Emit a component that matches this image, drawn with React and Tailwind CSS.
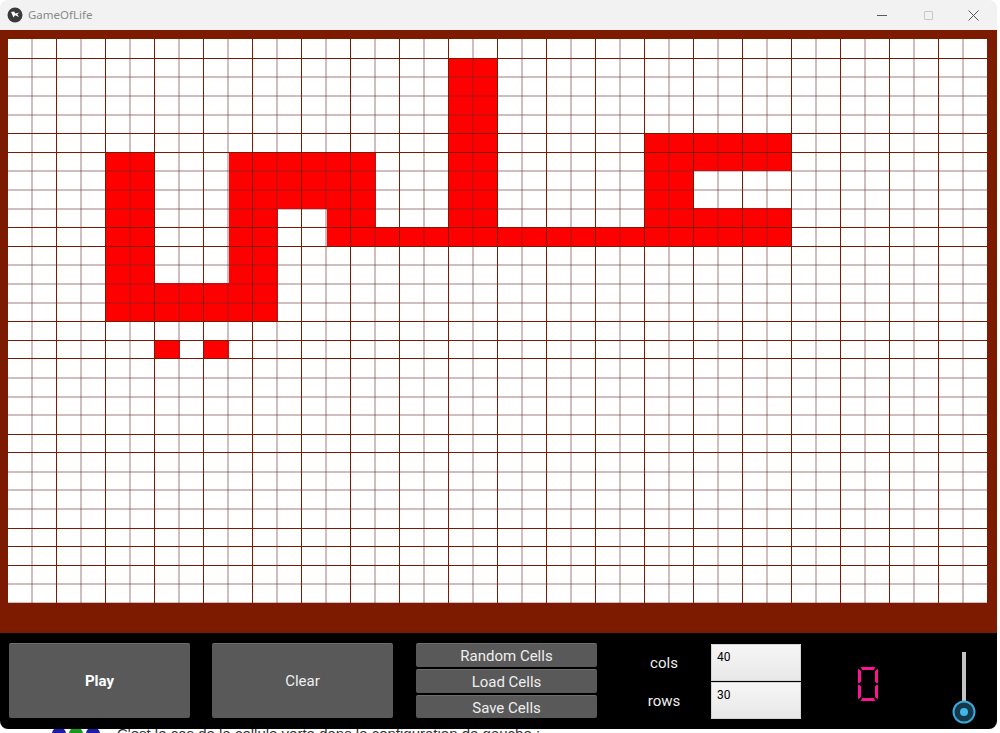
import React from "react";

const COLS = 40;
const ROWS = 30;
const CW = 24.5;
const RH = 18.78;
const OFF = 0.22;
const DARK_ROWS = new Set([1, 5, 6, 10, 11, 15, 16, 17, 21, 22, 26, 27, 28]);

function buildAlive() {
  const s = new Set();
  const add = (c0, c1, r0, r1) => {
    for (let c = c0; c <= c1; c++) for (let r = r0; r <= r1; r++) s.add(c + "," + r);
  };
  add(18, 19, 1, 9);
  add(4, 5, 6, 14);
  add(6, 10, 13, 14);
  add(9, 10, 6, 14);
  add(9, 14, 6, 8);
  add(13, 14, 9, 10);
  add(13, 31, 10, 10);
  add(26, 31, 5, 6);
  add(26, 27, 7, 8);
  add(26, 31, 9, 9);
  add(6, 6, 16, 16);
  add(8, 8, 16, 16);
  return s;
}

const DARK = "#7a1a00";
const LIGHT = "rgba(100,40,40,0.3)";

function Board() {
  const alive = buildAlive();
  const cells = [];
  alive.forEach((k) => {
    const [c, r] = k.split(",").map(Number);
    const y0 = OFF + RH * r;
    const y1 = OFF + RH * (r + 1);
    cells.push(
      <rect key={"c" + k} x={CW * c} y={y0} width={CW} height={y1 - y0 + 0.6} fill="#ff0000" />
    );
  });
  const lines = [];
  for (let k = 1; k <= COLS; k++) {
    const x = CW * k - 1;
    const frac = x - Math.floor(x);
    if (Math.abs(frac) < 0.01) {
      lines.push(<rect key={"v" + k} x={x} y={0} width={1} height={564} fill={DARK} />);
    } else {
      lines.push(<rect key={"v" + k} x={Math.floor(x)} y={0} width={2} height={564} fill={LIGHT} />);
    }
  }
  for (let k = 1; k <= ROWS; k++) {
    const t = OFF + RH * k;
    if (DARK_ROWS.has(k)) {
      lines.push(<rect key={"h" + k} x={0} y={Math.round(t)} width={980} height={1} fill={DARK} />);
    } else {
      lines.push(<rect key={"h" + k} x={0} y={Math.floor(t)} width={980} height={2} fill={LIGHT} />);
    }
  }
  return (
    <svg width="980" height="564" viewBox="0 0 980 564" className="block bg-white" shapeRendering="crispEdges">
      {cells}
      {lines}
    </svg>
  );
}

function KivyIcon() {
  return (
    <svg width="16" height="16" viewBox="0 0 16 16" className="block">
      <circle cx="8" cy="8" r="7.5" fill="#3a3a3a" />
      <path d="M4 5 L6.5 10.5 L8 8.2 L12 10 L10.2 7.2 L12.5 5.6 L8.4 6.6 L7 4.6 Z" fill="#ffffff" />
    </svg>
  );
}

function SevenSegZero() {
  const c = "#ff1493";
  return (
    <svg width="22" height="36" viewBox="0 0 22 36" className="block">
      <polygon points="3.5,1 18.5,1 16.5,4 5.5,4" fill={c} />
      <polygon points="5.5,32 16.5,32 18.5,35 3.5,35" fill={c} />
      <polygon points="1,2.5 4,5 4,16 1,17.4" fill={c} />
      <polygon points="1,18.6 4,20 4,31 1,33.5" fill={c} />
      <polygon points="21,2.5 18,5 18,16 21,17.4" fill={c} />
      <polygon points="21,18.6 18,20 18,31 21,33.5" fill={c} />
    </svg>
  );
}

function VSlider() {
  return (
    <svg width="30" height="74" viewBox="0 0 30 74" className="block">
      <rect x="13" y="0" width="4" height="60" fill="#c4c4c4" />
      <circle cx="15" cy="60" r="10.5" fill="#17384a" stroke="#3aa8d8" strokeWidth="2" />
      <circle cx="15" cy="60" r="4" fill="#3cb8ec" />
    </svg>
  );
}

export default function App() {
  return (
    <div className="w-[1000px] h-[733px] bg-white overflow-hidden flex flex-col font-['Roboto',sans-serif]">
      <div className="w-[997px] h-[729px] flex flex-col rounded-[8px] overflow-hidden shrink-0">
        {/* Title bar */}
        <div className="h-[30px] bg-[#f2f2f2] flex items-center shrink-0">
          <div className="ml-[7px]">
            <KivyIcon />
          </div>
          <span className="ml-[5px] text-[11.5px] text-[#8a8a8a] font-['Noto_Sans',sans-serif] leading-none pb-[1px]">
            GameOfLife
          </span>
          <div className="ml-auto flex items-center h-full">
            <div className="w-[46px] h-full flex items-center justify-center">
              <div className="w-[10px] h-[1px] bg-[#5a5a5a]" />
            </div>
            <div className="w-[46px] h-full flex items-center justify-center">
              <div className="w-[9px] h-[9px] border border-[#c8c8c8] rounded-[1px]" />
            </div>
            <div className="w-[46px] h-full flex items-center justify-center pr-[2px]">
              <svg width="11" height="11" viewBox="0 0 11 11" className="block">
                <path d="M0.5 0.5 L10.5 10.5 M10.5 0.5 L0.5 10.5" stroke="#5a5a5a" strokeWidth="1" />
              </svg>
            </div>
          </div>
        </div>
        {/* Board frame */}
        <div className="h-[603px] bg-[#7d1b00] pt-[9px] pl-[8px] shrink-0">
          <Board />
        </div>
        {/* Control panel */}
        <div className="h-[96px] bg-black flex items-start pt-[10px] pl-[9px] shrink-0">
          <button className="w-[181px] h-[75px] bg-[#595959] border-t border-[#6e6e6e] rounded-[2px] text-white text-[15px] font-bold pt-[1px]">
            Play
          </button>
          <button className="ml-[22px] w-[181px] h-[75px] bg-[#595959] border-t border-[#6e6e6e] rounded-[2px] text-[#eeeeee] text-[15px] pt-[1px]">
            Clear
          </button>
          <div className="ml-[23px] w-[181px] flex flex-col gap-[2px]">
            <button className="h-[24px] bg-[#595959] border-t border-[#6e6e6e] rounded-[2px] text-[#eeeeee] text-[15px] leading-none pt-[2px]">
              Random Cells
            </button>
            <button className="h-[24px] bg-[#595959] border-t border-[#6e6e6e] rounded-[2px] text-[#eeeeee] text-[15px] leading-none pt-[2px]">
              Load Cells
            </button>
            <button className="h-[23px] bg-[#595959] border-t border-[#6e6e6e] rounded-[2px] text-[#eeeeee] text-[15px] leading-none pt-[2px]">
              Save Cells
            </button>
          </div>
          <div className="ml-[22px] w-[88px] flex flex-col pt-[1px] text-[#eeeeee] text-[15px]">
            <div className="h-[38px] flex items-center justify-center pl-[2px]">cols</div>
            <div className="h-[38px] flex items-center justify-center pl-[2px]">rows</div>
          </div>
          <div className="ml-[4px] w-[90px] flex flex-col gap-[1px] pt-[1px]">
            <div className="h-[37px] bg-linear-to-b from-[#f6f6f6] to-[#e8e8e8] border border-[#d4d4d4] px-[5px] pt-[5px] text-[12px] text-black leading-[14px]">
              40
            </div>
            <div className="h-[37px] bg-linear-to-b from-[#f6f6f6] to-[#e8e8e8] border border-[#d4d4d4] px-[5px] pt-[5px] text-[12px] text-black leading-[14px]">
              30
            </div>
          </div>
          <div className="ml-[56px] mt-[23px]">
            <SevenSegZero />
          </div>
          <div className="ml-[70px] mt-[9px]">
            <VSlider />
          </div>
        </div>
      </div>
      {/* page behind window */}
      <div className="h-[4px] overflow-hidden shrink-0">
        <div className="-mt-[5px] flex items-center h-[20px] font-['Liberation_Sans',sans-serif] text-[15px] text-[#333333]">
          <div className="ml-[52px] flex gap-[3px]">
            <div className="w-[14px] h-[14px] rounded-full bg-[#1c1ca8]" />
            <div className="w-[14px] h-[14px] rounded-full bg-[#1a9a1a]" />
            <div className="w-[14px] h-[14px] rounded-full bg-[#1c1ca8]" />
          </div>
          <span className="ml-[17px]">C'est le cas de la cellule verte dans la configuration de gauche :</span>
        </div>
      </div>
    </div>
  );
}
